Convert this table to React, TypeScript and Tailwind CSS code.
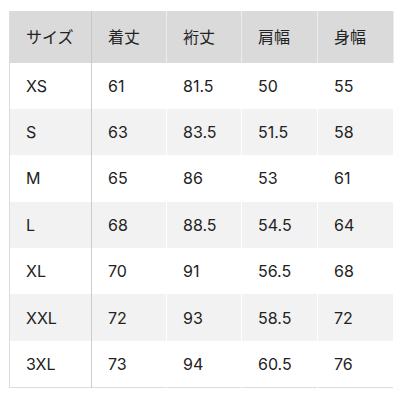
import React from 'react';

const header = ['サイズ', '着丈', '裄丈', '肩幅', '身幅'];

const rows: string[][] = [
  ['XS', '61', '81.5', '50', '55'],
  ['S', '63', '83.5', '51.5', '58'],
  ['M', '65', '86', '53', '61'],
  ['L', '68', '88.5', '54.5', '64'],
  ['XL', '70', '91', '56.5', '68'],
  ['XXL', '72', '93', '58.5', '72'],
  ['3XL', '73', '94', '60.5', '76'],
];

const widths = ['w-[82px]', 'w-[75px]', 'w-[75px]', 'w-[76px]', 'w-[76px]'];

const App: React.FC = () => {
  return (
    <div
      className="w-[402px] h-[402px] bg-white pt-[11px] pl-[9px] text-[#222]"
      style={{ fontFamily: 'Inter, "Noto Sans CJK JP", sans-serif' }}
    >
      <table className="border-collapse border border-[#dcdcdc] table-fixed text-[16px]">
        <thead>
          <tr className="bg-[#dadada] h-[51px]">
            {header.map((h, i) => (
              <th
                key={h}
                className={`${widths[i]} text-left font-normal pl-4 ${
                  i === 0 ? 'border-r border-[#c8c8c8]' : 'border-r border-[#ececec]'
                }`}
              >
                {h}
              </th>
            ))}
          </tr>
        </thead>
        <tbody>
          {rows.map((r, ri) => (
            <tr key={r[0]} className={`h-[46.4px] ${ri % 2 === 1 ? 'bg-[#f2f2f2]' : 'bg-white'}`}>
              {r.map((c, i) => (
                <td
                  key={i}
                  className={`pl-4 ${
                    i === 0 ? 'border-r border-[#cccccc]' : 'border-r border-white'
                  }`}
                >
                  {c}
                </td>
              ))}
            </tr>
          ))}
        </tbody>
      </table>
    </div>
  );
};

export default App;
